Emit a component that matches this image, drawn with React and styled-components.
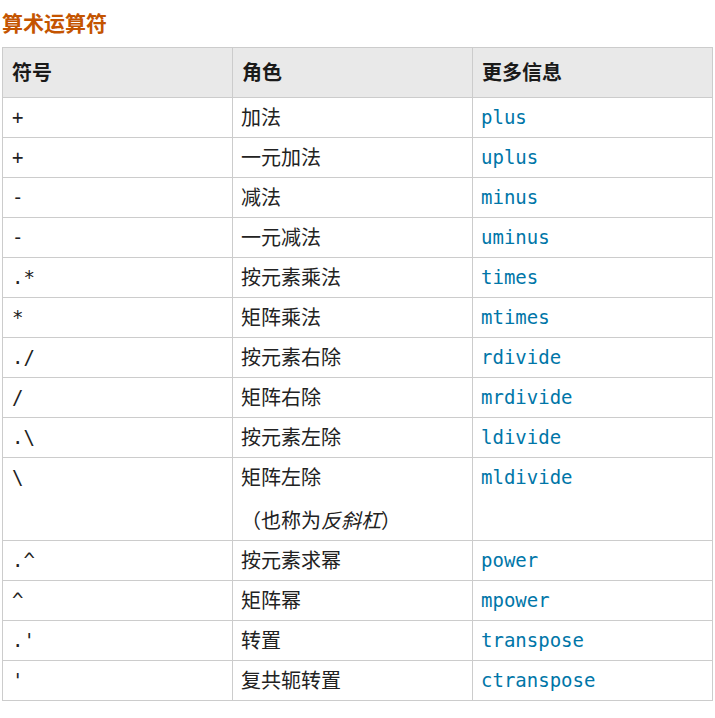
import React from "react";
import styled, { createGlobalStyle } from "styled-components";

const GlobalStyle = createGlobalStyle`
  body {
    margin: 0;
    background: #fff;
    font-family: "Noto Sans CJK SC", "Noto Sans", sans-serif;
  }
`;

const Page = styled.div`
  padding: 6px 3px 0 2px;
`;

const Title = styled.h3`
  margin: 0 0 9px;
  font-size: 21px;
  line-height: 32px;
  font-weight: 700;
  color: #c45400;
`;

const Table = styled.table`
  width: 710px;
  border-collapse: collapse;
  table-layout: fixed;
`;

const Col = styled.col`
  width: ${p => p.$w}px;
`;

const Th = styled.th`
  background: #e9e9e9;
  border: 1px solid #cccccc;
  text-align: left;
  font-size: 20px;
  font-weight: 700;
  color: #1a1a1a;
  line-height: 24px;
  padding: 12px 9px 13px;
`;

const Td = styled.td`
  border: 1px solid #cccccc;
  vertical-align: top;
  padding: 7px 8px 8px;
  line-height: 24px;
  font-size: 20px;
  color: #222;
`;

const Sym = styled.code`
  display: block;
  font-family: "DejaVu Sans Mono", "Liberation Mono", monospace;
  font-size: 19px;
  line-height: 24px;
  color: #222;
  padding-left: 1px;
`;

const Fn = styled.a`
  display: block;
  font-family: "DejaVu Sans Mono", "Liberation Mono", monospace;
  font-size: 19px;
  line-height: 24px;
  color: #0076a8;
  text-decoration: none;
`;

const Role = styled.div`
  line-height: 24px;
  height: 24px;
`;

const Note = styled.div`
  margin: 19px 0 0;
  line-height: 24px;
  height: 24px;
`;

const rows = [
  ["+", "加法", "plus"],
  ["+", "一元加法", "uplus"],
  ["-", "减法", "minus"],
  ["-", "一元减法", "uminus"],
  [".*", "按元素乘法", "times"],
  ["*", "矩阵乘法", "mtimes"],
  ["./", "按元素右除", "rdivide"],
  ["/", "矩阵右除", "mrdivide"],
  [".\\", "按元素左除", "ldivide"],
  ["\\", "矩阵左除", "mldivide", true],
  [".^", "按元素求幂", "power"],
  ["^", "矩阵幂", "mpower"],
  [".'", "转置", "transpose"],
  ["'", "复共轭转置", "ctranspose"],
];

export default function App() {
  return (
    <Page>
      <GlobalStyle />
      <Title>算术运算符</Title>
      <Table>
        <colgroup>
          <Col $w={230} />
          <Col $w={240} />
          <Col $w={240} />
        </colgroup>
        <thead>
          <tr>
            <Th>符号</Th>
            <Th>角色</Th>
            <Th>更多信息</Th>
          </tr>
        </thead>
        <tbody>
          {rows.map(([sym, role, fn, note], i) => (
            <tr key={i}>
              <Td><Sym>{sym}</Sym></Td>
              <Td>
                <Role>{role}</Role>
                {note && <Note>（也称为<i>反斜杠</i>）</Note>}
              </Td>
              <Td><Fn href="#">{fn}</Fn></Td>
            </tr>
          ))}
        </tbody>
      </Table>
    </Page>
  );
}
